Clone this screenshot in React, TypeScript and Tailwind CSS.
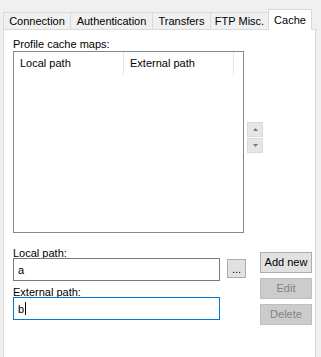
import React from "react";

const font = { fontFamily: '"Liberation Sans", Arial, sans-serif' };

function Tab({ label, w, active }: { label: string; w: string; active?: boolean }) {
  if (active) {
    return (
      <div
        className={`${w} h-[21px] flex items-start justify-center pt-[3px] bg-white border-l border-t border-r border-[#d9d9d9] text-black`}
      >
        {label}
      </div>
    );
  }
  return (
    <div
      className={`${w} h-[18px] flex items-center justify-center border-l border-t border-b border-[#d9d9d9] bg-[#f0f0f0] text-black`}
    >
      {label}
    </div>
  );
}

export default function App() {
  return (
    <div
      className="w-[321px] h-[357px] bg-[#f0f0f0] text-[11px] text-black overflow-hidden"
      style={font}
    >
      <div className="flex items-end pt-[9px] pl-[3px] leading-[14px]">
        <Tab label="Connection" w="w-[67px]" />
        <Tab label="Authentication" w="w-[82px]" />
        <Tab label="Transfers" w="w-[58px]" />
        <Tab label="FTP Misc." w="w-[58px]" />
        <Tab label="Cache" w="w-[44px]" active />
        <div className="w-[5px] border-b border-r border-[#d9d9d9] h-0" />
      </div>
      <div className="ml-[3px] w-[313px] h-[330px] bg-white border-l border-r border-[#d9d9d9] pl-[9px]">
        <div className="pt-[8px] h-[21px] leading-[13px]">Profile cache maps:</div>
        <div className="flex items-start">
          <div className="w-[231px] h-[182px] border border-[#828790] bg-white">
            <div className="flex h-[23px] leading-[23px]">
              <div className="w-[110px] pl-[6px] border-r border-[#e5e5e5]">Local path</div>
              <div className="w-[110px] pl-[6px] border-r border-[#e5e5e5]">External path</div>
            </div>
          </div>
          <div className="ml-[3px] mt-[71px] flex flex-col gap-[1px]">
            <div className="w-[16px] h-[15px] bg-[#e6e6e6] border border-[#dadada] flex items-center justify-center">
              <svg width="5" height="3" viewBox="0 0 5 3">
                <path d="M2.5 0 L5 3 L0 3 Z" fill="#7a7a7a" />
              </svg>
            </div>
            <div className="w-[16px] h-[15px] bg-[#e6e6e6] border border-[#dadada] flex items-center justify-center">
              <svg width="5" height="3" viewBox="0 0 5 3">
                <path d="M0 0 L5 0 L2.5 3 Z" fill="#7a7a7a" />
              </svg>
            </div>
          </div>
        </div>
        <div className="flex mt-[14px]">
          <div className="w-[207px] flex flex-col">
            <div className="h-[11px] leading-[12px]">Local path:</div>
            <div className="h-[23px] border border-[#7a7a7a] bg-white flex items-center pl-[4px] leading-[14px]">
              a
            </div>
            <div className="mt-[5px] h-[11px] leading-[12px]">External path:</div>
            <div className="h-[23px] border border-[#0078d7] bg-white flex items-center pl-[4px] leading-[14px]">
              b<span className="inline-block w-px h-[13px] bg-black ml-[1px]" />
            </div>
          </div>
          <div className="ml-[7px] mt-[12px] w-[19px] h-[19px] bg-[#e1e1e1] border border-[#adadad] flex items-end justify-center pb-[3px] leading-[10px]">
            ...
          </div>
          <div className="ml-[14px] mt-[5px] flex flex-col gap-[5px]">
            <div className="w-[52px] h-[21px] bg-[#e1e1e1] border border-[#adadad] flex items-center justify-center">
              Add new
            </div>
            <div className="w-[52px] h-[21px] bg-[#cccccc] border border-[#bfbfbf] text-[#838383] flex items-center justify-center">
              Edit
            </div>
            <div className="w-[52px] h-[21px] bg-[#cccccc] border border-[#bfbfbf] text-[#838383] flex items-center justify-center">
              Delete
            </div>
          </div>
        </div>
      </div>
    </div>
  );
}
